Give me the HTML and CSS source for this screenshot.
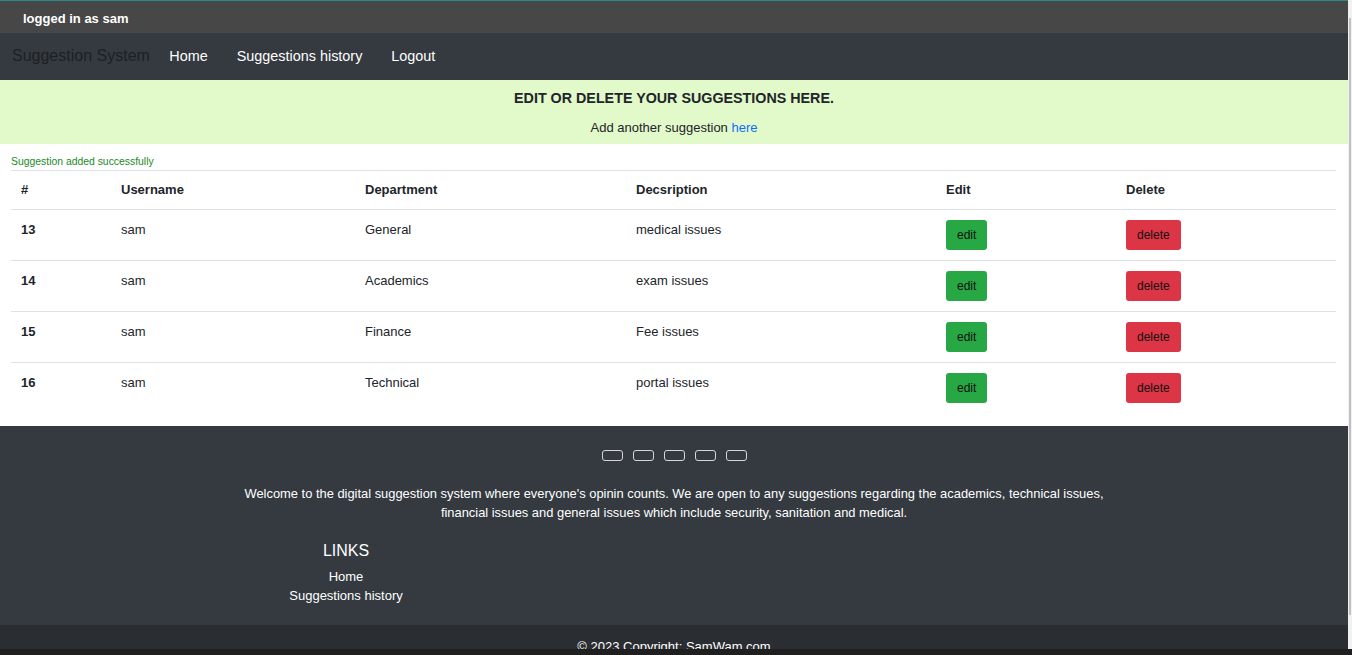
FILE: index.html
```html
<!DOCTYPE html>
<html lang="en">
<head>
<meta charset="utf-8">
<title>Suggestion System</title>
<link rel="stylesheet" href="styles.css">
</head>
<body>
<div class="viewport">
  <div class="page">
    <div class="accent"></div>
    <div class="userbar">logged in as sam</div>
    <nav class="navbar">
      <span class="brand">Suggestion System</span>
      <a class="nav-link" href="#">Home</a>
      <a class="nav-link" href="#">Suggestions history</a>
      <a class="nav-link" href="#">Logout</a>
    </nav>
    <section class="banner">
      <h1 class="banner-title">EDIT OR DELETE YOUR SUGGESTIONS HERE.</h1>
      <p class="banner-text">Add another suggestion <a class="link" href="#">here</a></p>
    </section>
    <div class="content">
      <p class="msg">Suggestion added successfully</p>
      <table class="table">
        <colgroup>
          <col class="c1"><col class="c2"><col class="c3"><col class="c4"><col class="c5"><col class="c6">
        </colgroup>
        <thead>
          <tr><th>#</th><th>Username</th><th>Department</th><th>Decsription</th><th>Edit</th><th>Delete</th></tr>
        </thead>
        <tbody>
          <tr><th>13</th><td>sam</td><td>General</td><td>medical issues</td><td><button class="btn btn-edit">edit</button></td><td><button class="btn btn-del">delete</button></td></tr>
          <tr><th>14</th><td>sam</td><td>Academics</td><td>exam issues</td><td><button class="btn btn-edit">edit</button></td><td><button class="btn btn-del">delete</button></td></tr>
          <tr><th>15</th><td>sam</td><td>Finance</td><td>Fee issues</td><td><button class="btn btn-edit">edit</button></td><td><button class="btn btn-del">delete</button></td></tr>
          <tr><th>16</th><td>sam</td><td>Technical</td><td>portal issues</td><td><button class="btn btn-edit">edit</button></td><td><button class="btn btn-del">delete</button></td></tr>
        </tbody>
      </table>
    </div>
    <footer class="footer">
      <div class="icons">
        <span class="icon-box"></span><span class="icon-box"></span><span class="icon-box"></span><span class="icon-box"></span><span class="icon-box"></span>
      </div>
      <p class="about">Welcome to the digital suggestion system where everyone's opinin counts. We are open to any suggestions regarding the academics, technical issues, financial issues and general issues which include security, sanitation and medical.</p>
      <div class="links">
        <h5 class="links-title">LINKS</h5>
        <a class="footer-link" href="#">Home</a>
        <a class="footer-link" href="#">Suggestions history</a>
      </div>
    </footer>
    <div class="copyright">© 2023 Copyright: SamWam.com</div>
  </div>
  <div class="scrollbar"><div class="thumb"></div></div>
</div>
<div class="taskbar"></div>
</body>
</html>
```
FILE: styles.css
```css
* { box-sizing: border-box; }
html, body { margin: 0; padding: 0; }
body {
  width: 1352px;
  height: 655px;
  overflow: hidden;
  font-family: "Liberation Sans", Arial, sans-serif;
  color: #212529;
  background: #fff;
}
.viewport { display: flex; height: 649px; }
.page { width: 1348px; height: 649px; overflow: hidden; background: #fff; }
.scrollbar { width: 4px; height: 649px; background: #f1f1f1; padding: 18px 1px 0 1px; }
.thumb { width: 2px; height: 597px; background: #c1c1c1; }
.taskbar { height: 6px; background: #1f1f1f; }

.accent { height: 1px; background: #2b8a8c; }
.userbar {
  height: 32px;
  background: #474747;
  color: #fff;
  font-weight: bold;
  font-size: 13px;
  line-height: 35px;
  padding-left: 23px;
}
.navbar {
  height: 47px;
  background: #343a40;
  display: flex;
  align-items: center;
  padding-left: 12px;
  padding-bottom: 2px;
}
.brand { font-size: 16px; color: #1d2024; margin-right: 5px; }
.nav-link {
  color: #fff;
  text-decoration: none;
  font-size: 14.4px;
  padding: 0 14.5px;
}
.banner {
  height: 64px;
  background: #e2f9c9;
  text-align: center;
  padding-top: 10px;
}
.banner-title {
  margin: 0;
  font-size: 14.3px;
  font-weight: bold;
  line-height: 17px;
}
.banner-text { margin: 12px 0 0; font-size: 13px; line-height: 17px; }
.link { color: #0d6efd; text-decoration: none; }

.content { padding: 0 12px 0 11px; }
.msg {
  margin: 0;
  padding-top: 12px;
  height: 26px;
  font-size: 10.4px;
  line-height: 11px;
  color: #198a1f;
}
.table { width: 1325px; border-collapse: collapse; table-layout: fixed; font-size: 13px; }
.c1 { width: 100px; } .c2 { width: 244px; } .c3 { width: 271px; }
.c4 { width: 310px; } .c5 { width: 180px; } .c6 { width: 220px; }
.table th, .table td {
  text-align: left;
  vertical-align: top;
  padding: 10px;
  line-height: 20px;
  border-top: 1px solid #dee2e6;
}
.table thead th { line-height: 18px; }
.table th { font-weight: bold; }
.btn {
  height: 30px;
  padding: 0 11px;
  border: 0;
  border-radius: 3px;
  font-family: "Liberation Sans", Arial, sans-serif;
  font-size: 12px;
  color: #111;
  display: block;
}
.btn-edit { background: #28a745; }
.btn-del { background: #dc3545; }

.footer {
  margin-top: 13px;
  height: 199px;
  background: #343a40;
  color: #fff;
  padding-top: 24px;
}
.icons { display: flex; justify-content: center; gap: 10px; }
.icon-box {
  width: 21px;
  height: 11px;
  border: 1px solid #d6d6d6;
  border-radius: 3px;
}
.about {
  width: 880px;
  margin: 23px auto 0;
  text-align: center;
  font-size: 12.9px;
  line-height: 19px;
}
.links {
  width: 692px;
  margin-top: 19px;
  text-align: center;
  display: flex;
  flex-direction: column;
  align-items: center;
}
.links-title { margin: 0 0 6px; font-size: 16px; font-weight: normal; line-height: 20px; }
.footer-link { color: #fff; text-decoration: none; font-size: 13px; line-height: 19px; }
.copyright {
  height: 40px;
  background: #2a2e33;
  color: #fff;
  text-align: center;
  font-size: 13px;
  padding-top: 14px;
}
```
